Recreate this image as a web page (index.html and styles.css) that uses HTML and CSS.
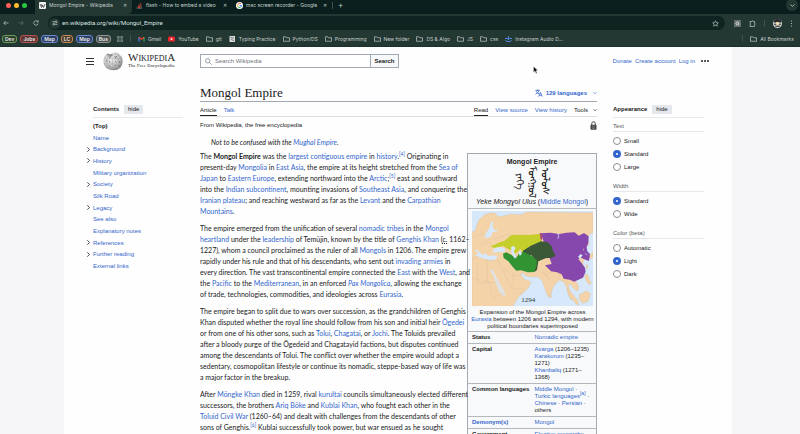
FILE: index.html
```html
<!DOCTYPE html>
<html lang="en">
<head>
<meta charset="utf-8">
<title>Mongol Empire - Wikipedia</title>
<link rel="stylesheet" href="styles.css">
</head>
<body>
<svg class="defs" width="0" height="0" aria-hidden="true">
  <symbol id="folder" viewBox="0 0 14 12"><path d="M1 10.5V1.5h4.5l1.5 2h6v7z" fill="none" stroke="#b9c4c1" stroke-width="1.5" stroke-linejoin="round"/></symbol>
  <symbol id="down" viewBox="0 0 8 8"><path d="M1 2.5l3 3 3-3" fill="none" stroke="currentColor" stroke-width="1.3"/></symbol>
  <symbol id="right" viewBox="0 0 8 8"><path d="M2 0.5l3.5 3.5L2 7.5" fill="none" stroke="currentColor" stroke-width="1.3"/></symbol>
</svg>
<div class="browser">
  <div class="tabstrip">
    <div class="lights"><i class="red"></i><i class="yellow"></i><i class="green"></i></div>
    <div class="tab active">
      <svg class="fav" viewBox="0 0 14 14"><rect width="14" height="14" rx="2" fill="#f3f3f3"/><path d="M2 4l3 7 2-5 2 5 3-7M4 4l3 5" fill="none" stroke="#222" stroke-width="1.3"/></svg>
      <span>Mongol Empire - Wikipedia</span><button class="x" aria-label="Close tab">✕</button>
    </div>
    <div class="tab">
      <svg class="fav" viewBox="0 0 14 14"><path d="M2 9v4h9V9" fill="none" stroke="#777" stroke-width="1.2"/><path d="M4 11h5M4 8.500l5 1M5 5.500l5 3M8 2l3 5" stroke="#d9493a" stroke-width="1.7"/></svg>
      <span>flash - How to embed a video</span><button class="x" aria-label="Close tab">✕</button>
    </div>
    <div class="tab">
      <svg class="fav" viewBox="0 0 14 14"><circle cx="7" cy="7" r="7" fill="#fff"/><g fill="none" stroke-width="2"><path d="M10 4A4 4 0 0 0 3.500 5" stroke="#ea4335"/><path d="M3.500 5a4 4 0 0 0 0 4" stroke="#fbbc05"/><path d="M3.500 9A4 4 0 0 0 9.500 10" stroke="#34a853"/><path d="M9.500 10A4 4 0 0 0 11 7H7" stroke="#4285f4"/></g></svg>
      <span>mac screen recorder - Google</span><button class="x" aria-label="Close tab">✕</button>
    </div>
    <i class="bar"></i>
    <button class="new" aria-label="New tab">+</button>
    <button class="tabmenu" aria-label="Search tabs"><svg viewBox="0 0 8 8"><use href="#down"/></svg></button>
  </div>
  <div class="toolbar">
    <button class="ico" aria-label="Back"><svg viewBox="0 0 12 12"><path d="M11 6H1.500M5.500 2l-4 4 4 4" fill="none" stroke="#c3cecb" stroke-width="1.4"/></svg></button>
    <button class="ico" aria-label="Forward"><svg viewBox="0 0 12 12"><path d="M1 6h9.500M6.500 2l4 4-4 4" fill="none" stroke="#61736f" stroke-width="1.4"/></svg></button>
    <button class="ico" aria-label="Reload"><svg viewBox="0 0 12 12"><path d="M10.500 7A4.500 4.500 0 1 1 9.500 3M10.500 .5V4H7" fill="none" stroke="#c3cecb" stroke-width="1.4"/></svg></button>
    <div class="url">
      <span class="site"><svg viewBox="0 0 12 12"><g fill="none" stroke="#d5dedb" stroke-width="1.4"><path d="M1 3.500h5M11 8.500H6"/><circle cx="8.500" cy="3.500" r="1.700"/><circle cx="3.500" cy="8.500" r="1.700"/></g></svg></span>
      <input type="text" aria-label="Address" value="en.wikipedia.org/wiki/Mongol_Empire">
      <svg class="star" viewBox="0 0 14 14"><path d="M7 1.500l1.700 3.700 4 .4-3 2.700.9 4L7 10.200l-3.600 2.100.9-4-3-2.700 4-.4z" fill="none" stroke="#c3cecb" stroke-width="1.300"/></svg>
    </div>
    <div class="tools">
      <svg viewBox="0 0 14 14"><rect width="14" height="14" rx="1" fill="#66706e"/><path d="M9.500 5a3 3 0 1 0 0 4V7H7.500" fill="none" stroke="#fff" stroke-width="1.500"/></svg>
      <svg viewBox="0 0 14 14"><path d="M2 3h3.500a1.500 1.500 0 0 1 3 0H11v3.500a1.500 1.500 0 0 1 0 3V13H2V9.500a1.500 1.500 0 0 0 0-3z" fill="none" stroke="#c3cecb" stroke-width="1.400"/></svg>
      <i class="bar"></i>
      <svg class="avatar" viewBox="0 0 16 16"><circle cx="8" cy="8" r="8" fill="#ddd"/><path d="M1 6a7 6 0 0 1 14 0z" fill="#26272a"/><path d="M2 8h12v3H2z" fill="#52534f"/><circle cx="8" cy="8" r="3" fill="#eee0b0"/><path d="M4 13h8" stroke="#333" stroke-width="2"/></svg>
      <svg class="kebab" viewBox="0 0 4 14"><g fill="#c3cecb"><circle cx="2" cy="2" r="1.200"/><circle cx="2" cy="7" r="1.200"/><circle cx="2" cy="12" r="1.200"/></g></svg>
    </div>
  </div>
  <div class="bookmarks">
    <div class="groups">
      <button class="g dev">Dev</button><button class="g jobs">Jobs</button><button class="g map">Map</button><button class="g lc">LC</button><button class="g map">Map</button><button class="g bus">Bus</button>
    </div>
    <svg class="apps" viewBox="0 0 12 12"><g fill="none" stroke="#9caaa6" stroke-width="1.300"><path d="M1 1h3.500v3.500H1zM7.500 1H11v3.500H7.500zM1 7.500h3.500V11H1zM7.500 7.500H11V11H7.500z"/></g></svg>
    <i class="bar"></i>
    <a href="#"><svg viewBox="0 0 14 12"><path d="M2 11V2" stroke="#4285f4" stroke-width="2.500"/><path d="M12 11V2" stroke="#34a853" stroke-width="2.500"/><path d="M2 2.500l5 4 5-4" fill="none" stroke="#ea4335" stroke-width="2.500"/></svg>Gmail</a>
    <a href="#"><svg viewBox="0 0 14 12"><rect y="1" width="14" height="10" rx="2.500" fill="#e8242b"/><path d="M5.500 3.500v5L10 6z" fill="#fff"/></svg>YouTube</a>
    <a href="#"><svg viewBox="0 0 14 12"><use href="#folder"/></svg>git</a>
    <a href="#"><svg viewBox="0 0 14 12"><rect x="1" width="11" height="12" fill="#d9dcdb"/><path d="M3 3h3M4 6l6 4M8 2v4" stroke="#555" stroke-width="1.500"/></svg>Typing Practice</a>
    <a href="#"><svg viewBox="0 0 14 12"><use href="#folder"/></svg>Python/DS</a>
    <a href="#"><svg viewBox="0 0 14 12"><use href="#folder"/></svg>Programming</a>
    <a href="#"><svg viewBox="0 0 14 12"><use href="#folder"/></svg>New folder</a>
    <a href="#"><svg viewBox="0 0 14 12"><use href="#folder"/></svg>DS &amp; Algo</a>
    <a href="#"><svg viewBox="0 0 14 12"><use href="#folder"/></svg>JS</a>
    <a href="#"><svg viewBox="0 0 14 12"><use href="#folder"/></svg>css</a>
    <a href="#"><svg viewBox="0 0 14 12"><path d="M7 0v7M3.500 4L7 7.500 10.500 4M1 8l2 3h8l2-3M0 5h4M10 5h4" fill="none" stroke="#5b8df0" stroke-width="1.800"/></svg>Instagram Audio D...</a>
    <i class="bar last"></i>
    <a href="#"><svg viewBox="0 0 14 12"><use href="#folder"/></svg>All Bookmarks</a>
  </div>
</div>

<div class="page">
  <header class="top">
    <button class="burger" aria-label="Main menu"><i></i><i></i><i></i></button>
    <a class="logo" href="#">
      <svg class="globe" viewBox="0 0 60 58">
        <defs><radialGradient id="ball" cx=".4" cy=".35" r=".7"><stop offset="0" stop-color="#f2f2f2"/><stop offset=".6" stop-color="#c4c4c4"/><stop offset="1" stop-color="#777"/></radialGradient></defs>
        <path d="M14 6Q20 11 27 7 32 2 41 4 60 13 59 31 57 56 31 57 3 56 1 29 2 13 14 6z" fill="url(#ball)"/>
        <path d="M12 8q4 9 0 18-2 15 10 29M28 7q-4 10 1 20-2 15 1 29M45 6q5 10 1 22 4 12-4 26M4 20q12 6 25 1 14 5 28 0M2 36q12 5 27 1 14 4 29-1M9 48q12 3 22 0 11 3 21-1" fill="none" stroke="#a2a2a2" stroke-width="1.300"/>
        <g stroke="#5a5a5a" stroke-width="1.800" fill="none"><path d="M17 15l3 6 3-6M35 14l3 7 3-7M8 29h6M20 28v6M36 29l5 5M50 29v6M18 42l4 4M34 42h6M48 42l3 4"/></g>
        <path d="M14 6q6 5 13 1l2 6-8 3-8-5z" fill="#333" opacity=".45"/>
      </svg>
      <span class="brand"><span class="word"><b>W</b>IKIPEDI<b>A</b></span><span class="tag">The Free Encyclopedia</span></span>
    </a>
    <form class="search">
      <label><svg viewBox="0 0 14 14"><circle cx="5.500" cy="5.500" r="4.500" fill="none" stroke="#72777d" stroke-width="1.400"/><path d="M9 9l4.500 4.500" stroke="#72777d" stroke-width="1.400"/></svg><input type="search" placeholder="Search Wikipedia" aria-label="Search Wikipedia"></label>
      <button type="button">Search</button>
    </form>
    <nav class="user"><a href="#">Donate</a><a href="#">Create account</a><a href="#">Log in</a><span class="dots"><i></i><i></i><i></i></span></nav>
  </header>

  <div class="cols">
    <nav class="toc">
      <div class="head"><b>Contents</b><button>hide</button></div>
      <ul>
        <li class="cur"><b>(Top)</b></li>
        <li><a href="#">Name</a></li>
        <li><svg viewBox="0 0 8 8"><use href="#right"/></svg><a href="#">Background</a></li>
        <li><svg viewBox="0 0 8 8"><use href="#right"/></svg><a href="#">History</a></li>
        <li><a href="#">Military organization</a></li>
        <li><svg viewBox="0 0 8 8"><use href="#right"/></svg><a href="#">Society</a></li>
        <li><a href="#">Silk Road</a></li>
        <li><svg viewBox="0 0 8 8"><use href="#right"/></svg><a href="#">Legacy</a></li>
        <li><a href="#">See also</a></li>
        <li><a href="#">Explanatory notes</a></li>
        <li><svg viewBox="0 0 8 8"><use href="#right"/></svg><a href="#">References</a></li>
        <li><svg viewBox="0 0 8 8"><use href="#right"/></svg><a href="#">Further reading</a></li>
        <li><a href="#">External links</a></li>
      </ul>
    </nav>

    <main>
      <div class="title"><h1>Mongol Empire</h1>
        <button class="langs"><svg class="tr" viewBox="0 0 20 20"><path d="M1 3.500h11M6.500 1v2.500M10 3.500Q8 10 1.500 13M3 5.500Q5 10 10 12M9 19l4.500-11L18 19M10.500 15.500h6" fill="none" stroke="#36c" stroke-width="2"/></svg>129 languages<svg class="chev" viewBox="0 0 8 8"><use href="#down"/></svg></button>
      </div>
      <div class="tabs"><span class="on">Article</span><a href="#">Talk</a><span class="push on">Read</span><a href="#">View source</a><a href="#">View history</a><button>Tools<svg class="chev" viewBox="0 0 8 8"><use href="#down"/></svg></button></div>
      <div class="sub"><span>From Wikipedia, the free encyclopedia</span><svg class="lock" viewBox="0 0 14 18"><path d="M3.500 8V5a3.500 3.500 0 0 1 7 0v3" fill="none" stroke="#444" stroke-width="2"/><rect x="1" y="7.500" width="12" height="10" rx="1.500" fill="#444"/><path d="M4 10h6M4 12.500h6M4 15h6" stroke="#999" stroke-width="1"/></svg></div>
      <article>
        <p class="hat">Not to be confused with the <a href="#">Mughal Empire</a>.</p>
        <table class="info">
          <colgroup><col class="k"><col></colgroup>
          <tbody>
          <tr><th colspan="2" class="name"><div>Mongol Empire</div>
            <div class="script" lang="mn-Mong"><span>ᠶᠡᠬᠡ</span><span>ᠮᠣᠩᠭᠣᠯ</span><span>ᠤᠯᠤᠰ</span></div>
            <div class="rom"><i>Yeke Mongɣol Ulus</i> (<a href="#">Middle Mongol</a>)</div></th></tr>
          <tr><td colspan="2" class="mapcell">
            <svg class="mapimg" viewBox="34 199 363 286" role="img" aria-label="Map of the Mongol Empire in 1294">
              <rect x="34" y="199" width="363" height="286" fill="#d6e8fa"/>
              <g fill="#f4d3a8" stroke="#c9b79b" stroke-width=".8">
                <path d="M34 262l10-4 4-16 8-18 16-14 18-6 14 2 8 10 16-2 22-6 30 2 20-8 197 2v60l-10 4-6 14 4 16-10 12-10-8 6 20 4 18-8 14 2 16-12 18-16 10 6 14 8 16-4 12-12-8-10-14-6 4 6 24 8 16-6 4-8-16-6-24-8-14-12-6-10 8-10 14-6 20-6 10-8-12-8-24-6-16-14-10-14 2-20-4-8-8-8 2 12 16 12 4 8 4-8 18-22 20-28 14-10-12-12-30-14-24-6-10 6-16-14 4-12-6-6-10 16-8-14-8-10 4-2 12-8 4-6 10-8-6-4-16-10-8-8-4 12 12 6 12-6-2-12-12-10-8-12 2-8 8z"/>
                <path d="M34 340l22-6 14 10 22 4 18-2 6 12 14 26 14 30 14 20 30-4-10 20-22 35H34z"/>
                <path d="M318 432l10 6 22 28 6 16-10-4-22-28zM356 450l22-12 12 10-8 22-16 6-10-12zM372 392l8-4 6 16 6 12-6 4-10-12zM264 446l6-2 3 12-6 4zM375 362l5-2 2 10-5 2zM384 336l13-14v14l-8 8z"/>
              </g>
              <path d="M78 262l8-12 6-18 6-2-2 18 6 8 8 0 0 4-14 2-4 12-12 6-10-2z" fill="#d6e8fa"/>
              <path d="M34 328l14 6 20 8 24 4 14-2 4-10-14-2-12 2-10-8-8 4-18-14-6-2 10 14-8 6-12-8z" fill="#d6e8fa"/>
              <path d="M88 378l8 12 18 48 14 18 8-8-26-46-14-28z" fill="#d6e8fa" opacity=".7"/>
              <path d="M98 315l10-9 20 3 8 8-8 6-20-1-10 4z" fill="#d6e8fa"/>
              <path d="M90 304l12-4 12-6 18-6 20-17 28-1 26 1 34-4 3 26-12 8-8-1-20 6-4 10-8 6-8-2-4-8-10 12-10 2-6-8-12-6-14-8-16 4-12 2z" fill="#c5cf2c"/>
              <path d="M240 266l30-2 26 4 22-4 24-1 12 10 16-8 14 10-1 20-6 14-10 4 6 14 14 8-2 14-10-4-14-6-8 4 8 10 12 16 2 12-8 18-14 6-12 6-14-6-18-3-6-13-14-6-18-3-18-18 20-4z" fill="#8648ac"/>
              <path d="M187 318l22-14 32-14 20 3 12 12 4 14 8 14-12 6-18 2-22 9-4 26-8 6-2-16 2-20-8-14-18 2-10-8z" fill="#3b5936"/>
              <path d="M127 327l10-4 16 8 12 10 6-8 6-12 14 2 12 6 14 7 12 12-2 16-6 18-20 1-20-6-14 1-10-10-14-18-14-10z" fill="#329333"/>
              <path d="M151 308l8-4 6 6-6 10 8 16-4 6-10-14zM173 324l6-6 5 8-6 8z" fill="#d6e8fa"/>
              <path d="M237 265l4 0 4 8-2 16-4-8z" fill="#b05070"/>
              <path d="M290 264l4 8-2 10" fill="none" stroke="#d6e8fa" stroke-width="2.500"/>
              <path d="M352 336l8-8 6 4-8 10z" fill="#d6e8fa"/><path d="M370 310l8-2 2 12 8 8-2 10-8-10-10-4z" fill="#8648ac"/>
              <circle cx="351" cy="402" r="3" fill="#8648ac"/>
              <path d="M38 280l26-14 14 10M100 284l16-6 30-12M60 300l20-10 14 10M50 355v60l60-2M80 345v70M34 400l50 10 10 40M92 460l40-14M246 376l20 30M234 376l20 14 20-8M290 385l16 12M130 370l20 20 30 4M160 382l-4 30" fill="none" stroke="#cdb699" stroke-width=".8"/>
              <text x="182" y="471" class="year">1294</text>
            </svg>
            <div class="cap">Expansion of the Mongol Empire across <a href="#">Eurasia</a> between 1206 and 1294, with modern political boundaries superimposed</div></td></tr>
          <tr><th>Status</th><td><a href="#">Nomadic empire</a></td></tr>
          <tr><th>Capital</th><td><a href="#">Avarga</a> (1206–1235)<br><a href="#">Karakorum</a> (1235–<br>1271)<br><a href="#">Khanbaliq</a> (1271–<br>1368)</td></tr>
          <tr><th>Common languages</th><td><a href="#">Middle Mongol</a> ·<br><a href="#">Turkic languages</a><sup><a href="#">[a]</a></sup> ·<br><a href="#">Chinese</a> · <a href="#">Persian</a> ·<br>others</td></tr>
          <tr><th><a href="#">Demonym(s)</a></th><td><a href="#">Mongol</a></td></tr>
          <tr><th>Government</th><td><a href="#">Elective monarchy</a></td></tr>
          </tbody>
        </table>
        <p>The <b>Mongol Empire</b> was the <a href="#">largest contiguous empire</a> in <a href="#">history</a>.<sup><a href="#">[4]</a></sup> Originating in<br>
          present-day <a href="#">Mongolia</a> in <a href="#">East Asia</a>, the empire at its height stretched from the <a href="#">Sea of<br>
          Japan</a> to <a href="#">Eastern Europe</a>, extending northward into the <a href="#">Arctic</a>;<sup><a href="#">[5]</a></sup> east and southward<br>
          into the <a href="#">Indian subcontinent</a>, mounting invasions of <a href="#">Southeast Asia</a>, and conquering the<br>
          <a href="#">Iranian plateau</a>; and reaching westward as far as the <a href="#">Levant</a> and the <a href="#">Carpathian<br>
          Mountains</a>.</p>
        <p>The empire emerged from the unification of several <a href="#">nomadic tribes</a> in the <a href="#">Mongol<br>
          heartland</a> under the <a href="#">leadership</a> of Temüjin, known by the title of <a href="#">Genghis Khan</a> (<abbr title="circa">c.</abbr> 1162–<br>
          1227), whom a council proclaimed as the ruler of all <a href="#">Mongols</a> in 1206. The empire grew<br>
          rapidly under his rule and that of his descendants, who sent out <a href="#">invading armies</a> in<br>
          every direction. The vast transcontinental empire connected the <a href="#">East</a> with the <a href="#">West</a>, and<br>
          the <a href="#">Pacific</a> to the <a href="#">Mediterranean</a>, in an enforced <a href="#"><i>Pax Mongolica</i></a>, allowing the exchange<br>
          of trade, technologies, commodities, and ideologies across <a href="#">Eurasia</a>.</p>
        <p>The empire began to split due to wars over succession, as the grandchildren of Genghis<br>
          Khan disputed whether the royal line should follow from his son and initial heir <a href="#">Ögedei</a><br>
          or from one of his other sons, such as <a href="#">Tolui</a>, <a href="#">Chagatai</a>, or <a href="#">Jochi</a>. The Toluids prevailed<br>
          after a bloody purge of the Ögedeid and Chagatayid factions, but disputes continued<br>
          among the descendants of Tolui. The conflict over whether the empire would adopt a<br>
          sedentary, cosmopolitan lifestyle or continue its nomadic, steppe-based way of life was<br>
          a major factor in the breakup.</p>
        <p>After <a href="#">Möngke Khan</a> died in 1259, rival <a href="#">kurultai</a> councils simultaneously elected different<br>
          successors, the brothers <a href="#">Ariq Böke</a> and <a href="#">Kublai Khan</a>, who fought each other in the<br>
          <a href="#">Toluid Civil War</a> (1260–64) and dealt with challenges from the descendants of other<br>
          sons of Genghis.<sup><a href="#">[6]</a></sup> Kublai successfully took power, but war ensued as he sought</p>
      </article>
    </main>

    <aside>
      <div class="head"><b>Appearance</b><button>hide</button></div>
      <fieldset><legend>Text</legend>
        <label><input type="radio" name="t">Small</label><label><input type="radio" name="t" checked>Standard</label><label><input type="radio" name="t">Large</label></fieldset>
      <fieldset><legend>Width</legend>
        <label><input type="radio" name="w" checked>Standard</label><label><input type="radio" name="w">Wide</label></fieldset>
      <fieldset><legend>Color (beta)</legend>
        <label><input type="radio" name="c">Automatic</label><label><input type="radio" name="c" checked>Light</label><label><input type="radio" name="c">Dark</label></fieldset>
    </aside>
  </div>
</div>
<svg class="cursor" viewBox="0 0 10 16" aria-hidden="true"><path d="M1 1v12l3-3 2 5 2-1-2-5h4z" fill="#111" stroke="#fff" stroke-width=".7"/></svg>
</body>
</html>
```
FILE: styles.css
```css
* { box-sizing: border-box; }
html, body { margin: 0; height: 100%; }
body {
  overflow: hidden;
  background: #f6f6f8;
  color: #202122;
  font: 6px/8px "Liberation Sans", Arial, sans-serif;
}
a { color: #36c; text-decoration: none; }
button { border: 0; padding: 0; background: none; color: inherit; font: inherit; }
svg { display: block; flex: none; }
.defs { position: absolute; }

/* browser window */
.browser {
  height: 47px;
  background: #233733;
  color: #c5cfcc;
  font: 5px/8px Inter, sans-serif;
  border-bottom: 1px solid #1b302c;
}
.bar { width: 1px; height: 7px; background: #3d524d; flex: none; }
.tabstrip { display: flex; align-items: center; height: 14px; padding: 0 2px 4px 6px; background: #0a1f1d; }
.lights { display: flex; gap: 3px; width: 29px; padding-top: 1px; }
.lights i { width: 5px; height: 5px; border-radius: 50%; }
.red { background: #ff5f57; }
.yellow { background: #febc2e; }
.green { background: #28c840; }
.tab { display: flex; align-items: center; gap: 3px; width: 100px; height: 10px; padding: 0 4px; }
.tab.active { height: 14px; margin-top: 4px; padding-bottom: 4px; background: #233733; border-radius: 0 0 4px 0; width: 97px; }
.tab span { flex: 1; overflow: hidden; white-space: nowrap; }
.fav { width: 7px; height: 7px; }
.x { width: 6px; font-size: 5px; }
.tab .x { color: #c5cfcc; font-family: "DejaVu Sans", sans-serif; }
.new { margin-left: 5px; font-size: 8px; }
.tabmenu { margin-left: auto; width: 12px; height: 12px; border-radius: 50%; background: #233733; display: grid; place-items: center; }
.tabmenu svg { width: 5px; height: 5px; }
.toolbar { display: flex; align-items: center; height: 17px; padding: 2px 7px 1px 3px; gap: 9px; }
.ico { width: 6px; }
.ico svg { width: 6px; height: 6px; }
.url { display: flex; align-items: center; flex: 1; height: 14px; padding: 0 6px 0 1px; gap: 2px; border-radius: 7px; background: #0f2321; }
.site { display: grid; place-items: center; width: 11px; height: 11px; border-radius: 50%; background: #233733; }
.site svg { width: 6px; height: 6px; }
.url input { flex: 1; border: 0; padding: 0; background: none; color: #dce3e1; font: 6px/8px Roboto, sans-serif; }
.star { width: 7px; height: 7px; }
.tools { display: flex; align-items: center; gap: 8px; }
.tools svg { width: 7px; height: 7px; }
.tools .avatar { width: 9px; height: 9px; }
.tools .kebab { width: 3px; }
.bookmarks { display: flex; align-items: center; gap: 7px; height: 15px; padding: 0 6px 0 2px; }
.bookmarks a { display: flex; align-items: center; gap: 3px; color: inherit; white-space: nowrap; }
.bookmarks a svg { width: 7px; height: 6px; }
.groups { display: flex; gap: 3px; margin-right: -1px; }
.g { height: 8px; padding: 0 2px; border: 1px solid; border-radius: 3px; color: #e6ebe9; line-height: 6px; font-weight: 600; }
.dev { border-color: #6f9d58; background: #293e2b; }
.jobs { border-color: #b8524e; background: #5e3434; }
.map { border-color: #6d87cf; background: #2e3f66; }
.lc { border-color: #c98853; background: #4e3b2c; }
.bus { border-color: #8f9492; background: #494f4f; }
.apps { width: 6px; height: 6px; }
.last { margin-left: auto; }

/* page */
.page { margin: 0 68px 0 64px; min-height: 100%; background: #fefefe; padding: 0 28px 0 22px; }
.top { display: flex; align-items: center; height: 28px; }
.burger { display: grid; gap: 2px; width: 8px; }
.burger i { height: 1px; background: #333; }
.logo { display: flex; align-items: center; gap: 5px; width: 106px; padding-left: 9px; color: #222; }
.globe { width: 20px; height: 20px; }
.brand { display: grid; font-family: "Liberation Serif", serif; white-space: nowrap; }
.word { font-size: 8px; line-height: 9px; }
.word b { font-weight: 400; font-size: 11px; }
.tag { font-size: 5px; line-height: 6px; }
.search { display: flex; height: 14px; width: 199px; }
.search label { display: flex; align-items: center; gap: 3px; flex: 1; padding: 0 4px; border: 1px solid #a2a9b1; background: #fff; }
.search label svg { width: 7px; height: 7px; }
.search input { flex: 1; min-width: 0; border: 0; padding: 0; background: none; font: inherit; }
.search input::placeholder { color: #72777d; opacity: 1; }
.search button { width: 29px; margin-left: -1px; border: 1px solid #a2a9b1; background: #f8f9fa; font-weight: 700; }
.user { display: flex; align-items: center; gap: 3px; margin-left: auto; margin-right: -5px; }
.dots { display: flex; gap: 1px; margin-left: 3px; }
.dots i { width: 2px; height: 2px; border-radius: 50%; background: #222; }

.cols { display: grid; grid-template-columns: 97px minmax(0, 1fr) 91px; column-gap: 17px; }
.head { display: flex; align-items: center; gap: 5px; height: 17px; border-bottom: 1px solid #e6e8eb; }
.head button { height: 9px; padding: 0 4px; background: #e4e7eb; border-radius: 1px; }
.toc { padding: 26px 0 0 7px; }
.toc ul { display: grid; grid-auto-rows: 1fr; height: 152px; margin: 2px 0 0; padding: 0; list-style: none; }
.toc li { display: flex; align-items: center; }
.toc li svg { width: 5px; height: 5px; margin: 0 2px 0 -7px; }
main { margin-right: -1px; }
.title { display: flex; align-items: flex-end; justify-content: space-between; height: 27px; border-bottom: 1px solid #a2a9b1; }
h1 { margin: 0; font: 400 13px/16px "Liberation Serif", serif; }
.chev { width: 4px; height: 4px; }
.langs { display: flex; align-items: center; gap: 3px; height: 16px; color: #36c; font-weight: 700; }
.langs .chev { margin-left: 3px; }
.tr { width: 8px; height: 8px; }
.tabs { display: flex; gap: 7px; height: 15px; border-bottom: 1px solid #dadde1; line-height: 16px; }
.tabs .on { border-bottom: 1px solid #202122; }
.tabs .push { margin-left: auto; }
.tabs button { display: flex; align-items: center; gap: 5px; height: 16px; }
.sub { display: flex; align-items: center; justify-content: space-between; height: 16px; }
.lock { width: 7px; height: 9px; }

article { font: 7px/11px Lato, "Liberation Sans", sans-serif; }
article p { margin: 0 0 6px; white-space: nowrap; }
article .hat { margin: 4px 0 3px 11px; font-style: italic; }
sup { font-size: 5px; line-height: 0; }
.info {
  float: right; width: 130px; margin: 2px 0 8px;
  table-layout: fixed;
  border: 1px solid #a2a9b1; border-collapse: collapse; background: #f8f9fa;
  font: 6px/7px "Liberation Sans", sans-serif; color: #202122;
}
.k { width: 63px; }
.info tr + tr { border-top: 1px solid #b4b9bf; }
.info th, .info td { padding: 2px 3px 2px 4px; vertical-align: top; text-align: left; }
.info th { padding-right: 0; }
.info .name { font-size: 7px; line-height: 9px; text-align: center; padding: 3px 0 2px; }
.rom { font-weight: 400; }
.script { display: flex; justify-content: center; align-items: center; gap: 2px; height: 31px; font-size: 10px; line-height: 11px; font-weight: 400; }
.script span { writing-mode: vertical-lr; }
.info .mapcell { padding: 2px 3px 1px 4px; text-align: center; }
.mapimg { width: 100%; margin-bottom: 3px; }
.cap { margin: 0 -3px; }
.year { font: 21px "Liberation Serif", serif; fill: #333; }

aside { padding-top: 26px; }
fieldset { display: grid; margin: 0 0 5px; padding: 0; border: 0; min-width: 0; }
legend { width: 100%; height: 14px; padding: 4px 0 0; margin-bottom: 2px; border-bottom: 1px solid #e6e8eb; color: #54595d; }
fieldset label { display: flex; align-items: center; gap: 3px; height: 13px; }
fieldset input { appearance: none; width: 8px; height: 8px; margin: 0; border: 1px solid #8a8f96; border-radius: 50%; background: #fff; }
fieldset input:checked { border: 3px solid #36c; }
.cursor { position: absolute; left: 533px; top: 66px; width: 5px; height: 8px; }
```
